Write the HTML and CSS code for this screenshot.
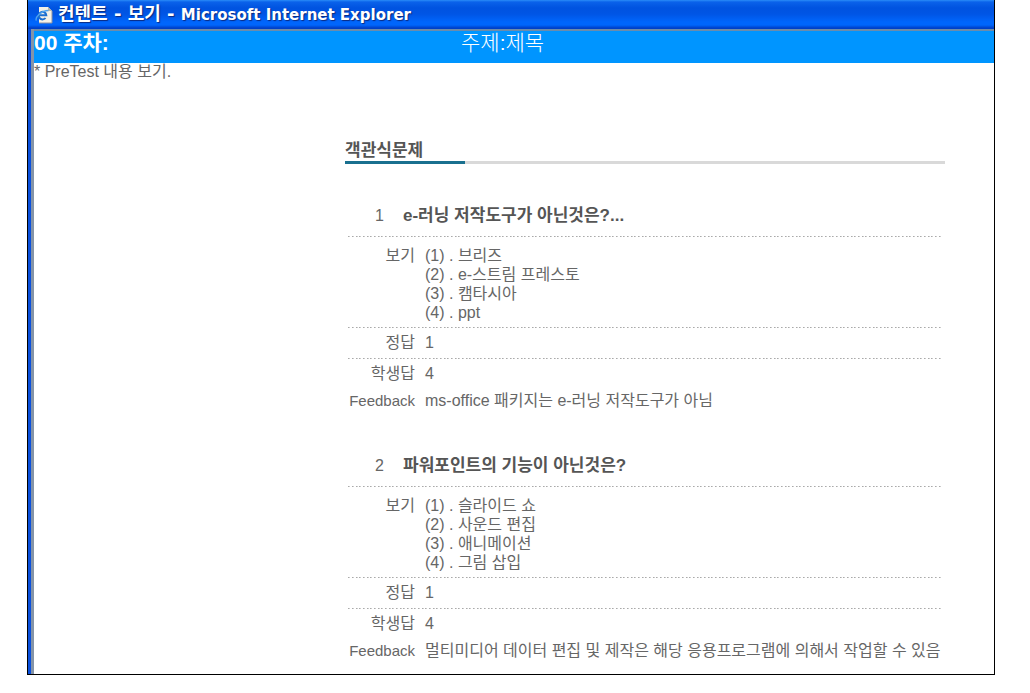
FILE: index.html
```html
<!DOCTYPE html>
<html lang="ko">
<head>
<meta charset="utf-8">
<title>컨텐트 - 보기</title>
<link rel="stylesheet" href="styles.css">
</head>
<body>
<div class="window">
  <header class="titlebar">
    <svg class="titlebar-icon" viewBox="0 0 18 18" aria-hidden="true">
      <path d="M4 1h9l4 4v12H4z" fill="#f4f1e6"/>
      <path d="M13 1l4 4h-4z" fill="#b9b5a6"/>
      <path d="M17 5v12H4" fill="none" stroke="#8c8fa0" stroke-width="1"/>
      <path d="M10.5 12A3.8 3.8 0 1 1 11.3 9.3H4.5" fill="none" stroke="#1c6fd0" stroke-width="2"/>
      <path d="M1.5 14.5C-.5 12 6 4.5 13.5 4.5" fill="none" stroke="#4fa3ee" stroke-width="1.3"/>
    </svg>
    <span class="titlebar-text">컨텐트 - 보기 - <span class="titlebar-app">Microsoft Internet Explorer</span></span>
  </header>
  <div class="frame">
    <div class="lesson">
      <strong class="lesson-week">00 주차:</strong>
      <span class="lesson-topic">주제:제목</span>
    </div>
    <p class="intro">* PreTest 내용 보기.</p>
    <main class="quiz">
      <h1 class="quiz-heading">객관식문제</h1>
      <div class="quiz-rule"></div>

      <section class="question">
        <div class="row row-title">
          <span class="number">1</span>
          <h2 class="question-title">e-러닝 저작도구가 아닌것은?...</h2>
        </div>
        <div class="row row-options">
          <span class="label">보기</span>
          <ul class="options">
            <li>(1) . 브리즈</li>
            <li>(2) . e-스트림 프레스토</li>
            <li>(3) . 캠타시아</li>
            <li>(4) . ppt</li>
          </ul>
        </div>
        <div class="row row-answer row-key"><span class="label">정답</span><span>1</span></div>
        <div class="row row-answer"><span class="label">학생답</span><span>4</span></div>
        <div class="row row-feedback"><span class="label label-latin">Feedback</span><span>ms-office 패키지는 e-러닝 저작도구가 아님</span></div>
      </section>

      <section class="question">
        <div class="row row-title">
          <span class="number">2</span>
          <h2 class="question-title">파워포인트의 기능이 아닌것은?</h2>
        </div>
        <div class="row row-options">
          <span class="label">보기</span>
          <ul class="options">
            <li>(1) . 슬라이드 쇼</li>
            <li>(2) . 사운드 편집</li>
            <li>(3) . 애니메이션</li>
            <li>(4) . 그림 삽입</li>
          </ul>
        </div>
        <div class="row row-answer row-key"><span class="label">정답</span><span>1</span></div>
        <div class="row row-answer"><span class="label">학생답</span><span>4</span></div>
        <div class="row row-feedback"><span class="label label-latin">Feedback</span><span>멀티미디어 데이터 편집 및 제작은 해당 응용프로그램에 의해서 작업할 수 있음</span></div>
      </section>
    </main>
  </div>
</div>
</body>
</html>
```

FILE: styles.css
```css
* {
  box-sizing: border-box;
}

body {
  margin: 0;
  padding: 0 35px 18px 27px;
  background: #fff;
  color: #666;
  font-family: "Liberation Sans", "Noto Sans CJK KR", sans-serif;
  font-size: 16px;
  line-height: 20px;
}

h1,
h2,
p,
ul {
  margin: 0;
  padding: 0;
}

.window {
  border: 1px solid #000;
  border-top: 0;
}

.titlebar {
  display: flex;
  align-items: center;
  gap: 5px;
  height: 29px;
  padding-left: 7px;
  background: linear-gradient(#2a8cf8 0, #0a62ea 2px, #0053e0 8px, #0055e5 14px, #0066fc 22px, #0066fc 25px, #0040c8 28px);
  color: #fff;
}

.titlebar-icon {
  width: 18px;
  height: 18px;
}

.titlebar-text {
  font-family: "DejaVu Sans", "Noto Sans CJK KR", sans-serif;
  font-size: 18px;
  font-weight: 700;
  line-height: 28px;
  white-space: nowrap;
  text-shadow: 1px 1px 1px #0a2a80;
}

.titlebar-app {
  font-size: 15px;
}

.frame {
  padding-bottom: 13px;
  border-left: 3px solid #0a50dc;
  background: linear-gradient(#8494a8, #8494a8) left / 3px 100% no-repeat;
}

.lesson,
.intro,
.quiz {
  margin-left: 3px;
}

.lesson {
  display: flex;
  height: 34px;
  border-top: 2px solid #6c8cab;
  background: #0095ff;
  color: #fff;
  font-size: 21px;
  line-height: 23px;
}

.lesson-week {
  flex: 0 0 427px;
  font-weight: 700;
}

.lesson-topic {
  font-weight: 300;
}

.intro {
  line-height: 17px;
}

.quiz {
  padding: 61px 49px 0 311px;
}

.quiz-heading,
.question-title {
  color: #555;
  font-size: 17px;
}

.quiz-heading {
  line-height: 20px;
}

.quiz-rule {
  height: 3px;
  background: linear-gradient(#19708f, #19708f) left / 120px 100% no-repeat #d9d9d9;
}

.question {
  margin: 40px 4px 0 3px;
}

.question + .question {
  margin-top: 43px;
}

.row {
  display: grid;
  grid-template-columns: 67px 1fr;
  column-gap: 10px;
}

.row-title,
.row-options,
.row-key {
  padding-bottom: 1px;
  background:
    linear-gradient(90deg, #aaa 1px, #ccc 1px 2px, transparent 2px 4px, #aaa 4px 5px, #ccc 5px 6px, transparent 6px 8px, #aaa 8px 9px, #ccc 9px 10px, transparent 10px)
    left bottom / 11px 1px repeat-x;
}

.row-title {
  grid-template-columns: 36px 1fr;
  column-gap: 19px;
  padding-bottom: 9px;
  line-height: 24px;
}

.question-title {
  line-height: 24px;
}

.number,
.label {
  text-align: right;
}

.label-latin {
  font-size: 15px;
}

.row-options {
  padding: 9px 0 6px;
  line-height: 19px;
}

.options {
  list-style: none;
}

.row-answer {
  line-height: 30px;
}

.row-feedback {
  padding-top: 2px;
}
```
